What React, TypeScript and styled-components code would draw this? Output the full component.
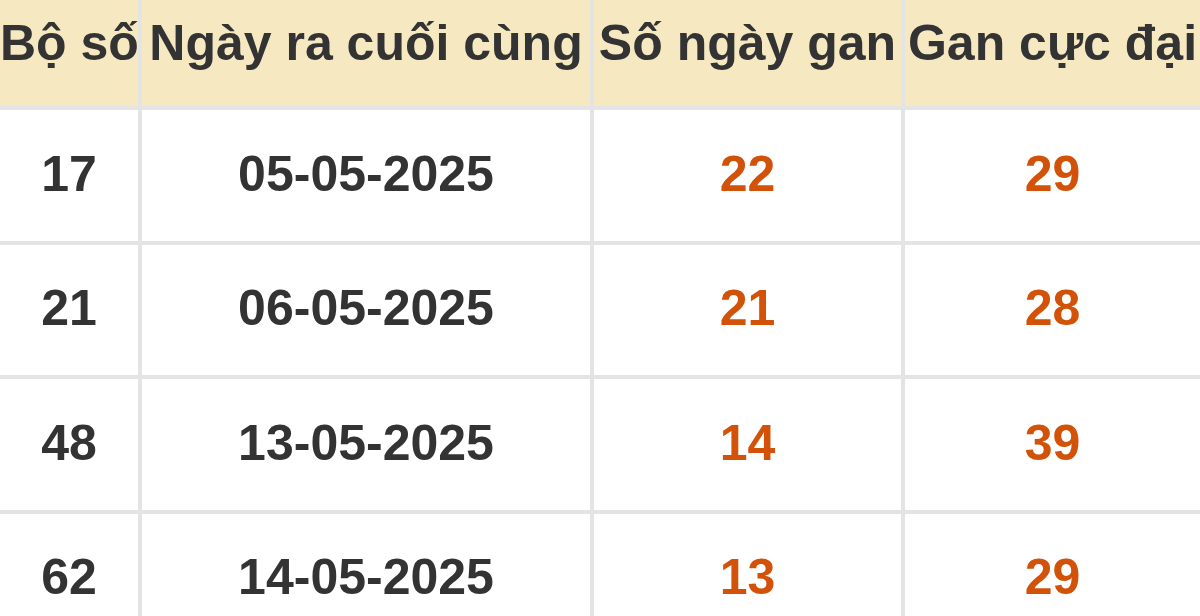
import React from 'react'
import styled, { createGlobalStyle } from 'styled-components'

const GlobalStyle = createGlobalStyle`
  html, body {
    margin: 0;
    padding: 0;
    background: #ffffff;
    overflow: hidden;
  }
  body {
    font-family: "Liberation Sans", Arial, sans-serif;
  }
`

const Table = styled.div`
  display: grid;
  grid-template-columns: 138px 448px 307px 295px;
  grid-template-rows: 106px repeat(4, 130.5px);
  gap: 4px;
  width: 1200px;
  background: #e4e4e4;
`

const HeadCell = styled.div`
  background: #f6e8c1;
  color: #333333;
  font-size: 50px;
  font-weight: 700;
  line-height: 1.15;
  padding-top: 15px;
  text-align: center;
  white-space: nowrap;
`

const Cell = styled.div<{ hot?: boolean }>`
  background: #ffffff;
  color: ${({ hot }) => (hot ? '#d15208' : '#333333')};
  font-size: 50px;
  font-weight: 700;
  display: flex;
  align-items: center;
  justify-content: center;
  padding-bottom: 3px;
`

const rows = [
  { so: '17', ngay: '05-05-2025', gan: '22', max: '29' },
  { so: '21', ngay: '06-05-2025', gan: '21', max: '28' },
  { so: '48', ngay: '13-05-2025', gan: '14', max: '39' },
  { so: '62', ngay: '14-05-2025', gan: '13', max: '29' },
]

const App = () => {
  return (
    <>
      <GlobalStyle />
      <Table>
        <HeadCell>Bộ số</HeadCell>
        <HeadCell>Ngày ra cuối cùng</HeadCell>
        <HeadCell>Số ngày gan</HeadCell>
        <HeadCell>Gan cực đại</HeadCell>
        {rows.map((r) => (
          <React.Fragment key={r.so}>
            <Cell>{r.so}</Cell>
            <Cell>{r.ngay}</Cell>
            <Cell hot>{r.gan}</Cell>
            <Cell hot>{r.max}</Cell>
          </React.Fragment>
        ))}
      </Table>
    </>
  )
}

export default App
